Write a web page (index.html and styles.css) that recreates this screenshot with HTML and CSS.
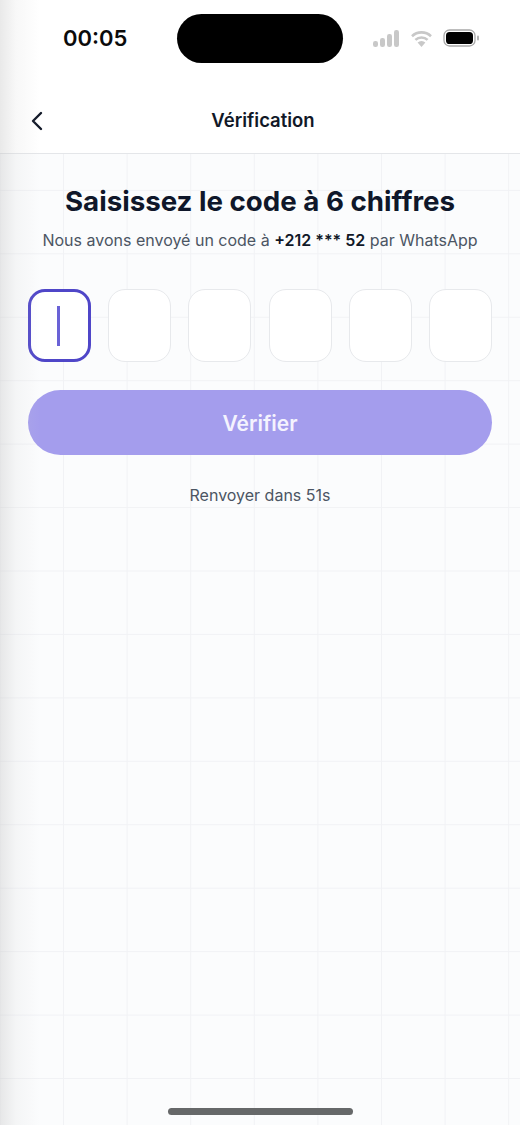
FILE: index.html
```html
<!DOCTYPE html>
<html lang="fr">
<head>
<meta charset="utf-8">
<title>Vérification</title>
<link rel="stylesheet" href="styles.css">
</head>
<body>
<div class="screen">
  <header class="top">
    <div class="status">
      <span class="time">00:05</span>
      <span class="island"></span>
      <span class="status-icons">
        <svg class="signal" width="26" height="17" viewBox="0 0 26 17"><rect x="0" y="11" width="5" height="6" rx="2.2"/><rect x="7" y="8" width="5" height="9" rx="2.2"/><rect x="14" y="4" width="5" height="13" rx="2.2"/><rect x="21" y="0" width="5" height="17" rx="2.2"/></svg>
        <svg class="wifi" width="23" height="17" viewBox="0 0 23 17"><path d="M11.5 17 7.6 12.6a5.6 5.6 0 0 1 7.8 0z"/><path class="arc" d="M2 6.2a13.8 13.8 0 0 1 19 0"/><path class="arc" d="M5.4 9.9a8.9 8.9 0 0 1 12.2 0"/></svg>
        <svg class="battery" width="37" height="18" viewBox="0 0 37 18"><rect x="1" y="1" width="31" height="16" rx="5.5" fill="#fff" stroke="#a8a8a8" stroke-width="1.3"/><rect x="3" y="3" width="27" height="12" rx="3.6" fill="#000"/><rect x="34" y="6.5" width="2" height="5" rx="1" fill="#b5b5b5"/></svg>
      </span>
    </div>
    <nav class="nav">
      <svg class="back" width="14" height="20" viewBox="0 0 14 20"><path d="M11 2 3 10l8 8" fill="none" stroke="#111827" stroke-width="2.4" stroke-linecap="round" stroke-linejoin="round"/></svg>
      <h1 class="nav-title">Vérification</h1>
    </nav>
  </header>
  <main class="content">
    <h2 class="title">Saisissez le code à 6 chiffres</h2>
    <p class="sub">Nous avons envoyé un code à <b>+212 *** 52</b> par WhatsApp</p>
    <div class="otp">
      <div class="cell active"><span class="caret"></span></div>
      <div class="cell"></div>
      <div class="cell"></div>
      <div class="cell"></div>
      <div class="cell"></div>
      <div class="cell"></div>
    </div>
    <button class="verify">Vérifier</button>
    <p class="resend">Renvoyer dans 51s</p>
  </main>
  <div class="shade"></div>
  <div class="home"></div>
</div>
</body>
</html>
```
FILE: styles.css
```css
* { box-sizing: border-box; }
html, body { margin: 0; padding: 0; }
body { font-family: Inter, "Liberation Sans", sans-serif; background: #fff; }
.screen {
  position: relative;
  width: 520px;
  height: 1125px;
  overflow: hidden;
  display: flex;
  flex-direction: column;
  background-color: #fbfcfd;
  background-image:
    linear-gradient(to right, #f1f2f5 1.4px, transparent 1.4px),
    linear-gradient(to bottom, #f1f2f5 1.4px, transparent 1.4px);
  background-size: 63.6px 63.45px;
  background-position: 63px 63px;
}
.top { background: #fff; border-bottom: 1.5px solid #e4e6e9; height: 154px; flex: none; }
.status { position: relative; height: 85px; }
.time {
  position: absolute; left: 63px; top: 24px;
  font-size: 22px; line-height: 28px; font-weight: 600; color: #0b0b0b;
}
.island {
  position: absolute; left: 177px; top: 14px;
  width: 166px; height: 49px; border-radius: 25px; background: #000;
}
.status-icons {
  position: absolute; left: 373px; top: 29px;
  display: flex; align-items: center; gap: 11px;
}
.signal { fill: #c8c8c8; }
.wifi { fill: #c8c8c8; }
.wifi .arc { fill: none; stroke: #c8c8c8; stroke-width: 2.6; }
.battery { margin-left: -1px; }
.nav { position: relative; height: 68px; padding: 2px 0 0 6px; display: flex; align-items: center; justify-content: center; }
.back { position: absolute; left: 30px; top: 26px; }
.nav-title { margin: 0; font-size: 18.5px; line-height: 24px; font-weight: 600; color: #111827; }
.content { flex: 1; display: flex; flex-direction: column; align-items: stretch; padding: 29px 28px 0; }
.title { margin: 0; text-align: center; font-size: 27.7px; line-height: 36px; font-weight: 700; color: #0f172a; }
.sub { margin: 9px 0 0; text-align: center; font-size: 16px; line-height: 24px; color: #4b5563; white-space: nowrap; }
.sub b { font-weight: 600; color: #111827; }
.otp { margin-top: 37px; display: flex; justify-content: space-between; }
.cell {
  width: 63px; height: 73px; border-radius: 17px;
  background: #fff; border: 1.5px solid #e7e9ec;
  display: flex; align-items: center; justify-content: center;
}
.cell.active { border: 3px solid #4f46c8; }
.caret { width: 2.5px; height: 40px; margin-right: 2px; background: #6a62d6; }
.verify {
  margin-top: 28px; height: 65px; width: 100%; padding: 2px 0 0;
  border: 0; border-radius: 33px; background: #a49ded; color: #f4f3fe;
  font-family: inherit; font-size: 21px; font-weight: 600;
}
.resend { margin: 29px 0 0; text-align: center; font-size: 16px; line-height: 22px; color: #4b5563; }
.shade {
  position: absolute; left: 0; top: 0; bottom: 0; width: 40px; pointer-events: none;
  background: linear-gradient(to right, rgba(190,190,190,.34), rgba(210,210,210,.16) 40%, rgba(255,255,255,0));
}
.home { position: absolute; left: 168px; top: 1108px; width: 185px; height: 7px; border-radius: 4px; background: #666869; }
```
